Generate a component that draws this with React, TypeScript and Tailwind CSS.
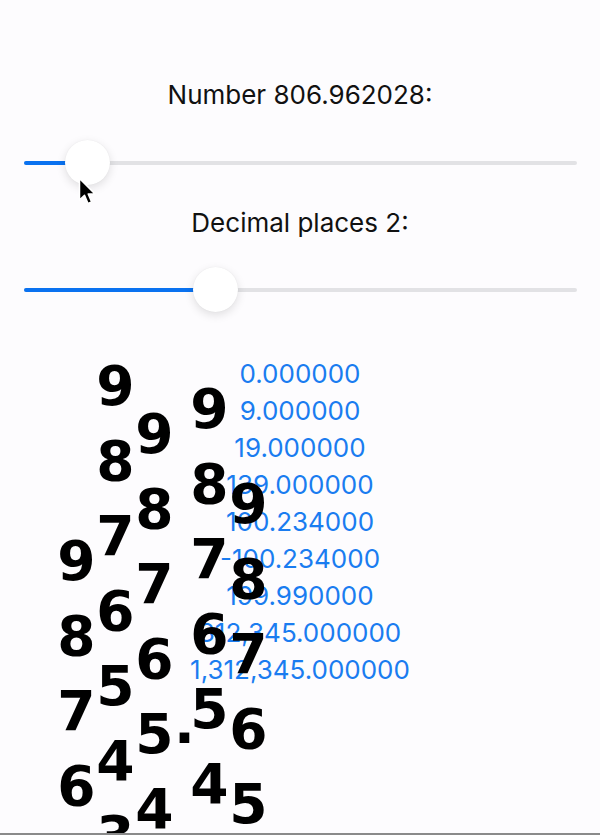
import React from "react";

const numbers = [
    "0.000000",
    "9.000000",
    "19.000000",
    "139.000000",
    "100.234000",
    "-100.234000",
    "199.990000",
    "312,345.000000",
    "1,312,345.000000",
];

const digits = [9, 8, 7, 6, 5, 4, 3, 2, 1, 0];

// roll offset of each digit column (px)
const columns: ({ kind: "digit"; offset: number } | { kind: "point"; offset: number })[] = [
    { kind: "digit", offset: 184 },
    { kind: "digit", offset: 9 },
    { kind: "digit", offset: 57 },
    { kind: "point", offset: 347 },
    { kind: "digit", offset: 32 },
    { kind: "digit", offset: 127 },
];

function Slider({ thumbX }: { thumbX: number }) {
    return (
        <div className="relative shrink-0 h-[45px] ml-[24px] mr-[23px] flex items-center">
            <div className="h-[4px] w-full rounded-full bg-[#e2e2e5] flex">
                <div className="h-full rounded-full bg-[#0a72f0]" style={{ width: thumbX - 24 }} />
            </div>
            <div
                className="absolute top-0 h-[45px] w-[45px] rounded-full bg-white shadow-[0_3px_10px_rgba(0,0,0,0.12),0_0_1px_rgba(0,0,0,0.08)]"
                style={{ left: thumbX - 24 - 22.5 }}
            />
        </div>
    );
}

function Cursor() {
    return (
        <svg className="absolute left-[78px] top-[177px] pointer-events-none" width="20" height="30" viewBox="0 0 20 30">
            <path
                d="M1.5 1.5 L1.5 23 L6.5 18.2 L10 26.5 L13.6 25 L10.2 17 L17 17 Z"
                fill="#000"
                stroke="#fff"
                strokeWidth="1.5"
                strokeLinejoin="round"
            />
        </svg>
    );
}

export default function App() {
    return (
        <div className="relative h-[835px] w-[600px] overflow-hidden bg-[#fdfcfe] flex flex-col">
            <div className="flex-1 min-h-0 overflow-hidden flex flex-col pt-[78px]">
                <div className="shrink-0 text-center text-[26px] leading-[34px] text-[#111] font-['Inter',sans-serif] mb-[28px]">
                    Number 806.962028:
                </div>
                <Slider thumbX={87.5} />
                <div className="shrink-0 text-center text-[26px] leading-[34px] text-[#111] font-['Inter',sans-serif] mt-[21px] mb-[27px]">
                    Decimal places 2:
                </div>
                <Slider thumbX={215} />

                <div className="shrink-0 grid mt-[28px]">
                    {/* formatted values */}
                    <div className="col-start-1 row-start-1 pt-[15px] flex flex-col items-center text-[26px] leading-[37px] text-[#1a7cf0] font-['Inter',sans-serif]">
                        {numbers.map((n) => (
                            <div key={n}>{n}</div>
                        ))}
                    </div>

                    {/* rolling digits */}
                    <div className="col-start-1 row-start-1 flex items-start pl-[57px] font-['DejaVu_Sans',sans-serif] font-bold text-[55px] leading-[75px] text-black">
                        {columns.map((col, i) =>
                            col.kind === "point" ? (
                                <div key={i} className="w-[16px] text-center" style={{ transform: `translateY(${col.offset}px)` }}>
                                    .
                                </div>
                            ) : (
                                <div key={i} className="w-[39px] flex flex-col items-center" style={{ transform: `translateY(${col.offset}px)` }}>
                                    {digits.map((d) => (
                                        <div key={d}>{d}</div>
                                    ))}
                                </div>
                            )
                        )}
                    </div>
                </div>
            </div>
            <div className="shrink-0 h-[2px] bg-[#8a8a8a]" />
            <Cursor />
        </div>
    );
}
